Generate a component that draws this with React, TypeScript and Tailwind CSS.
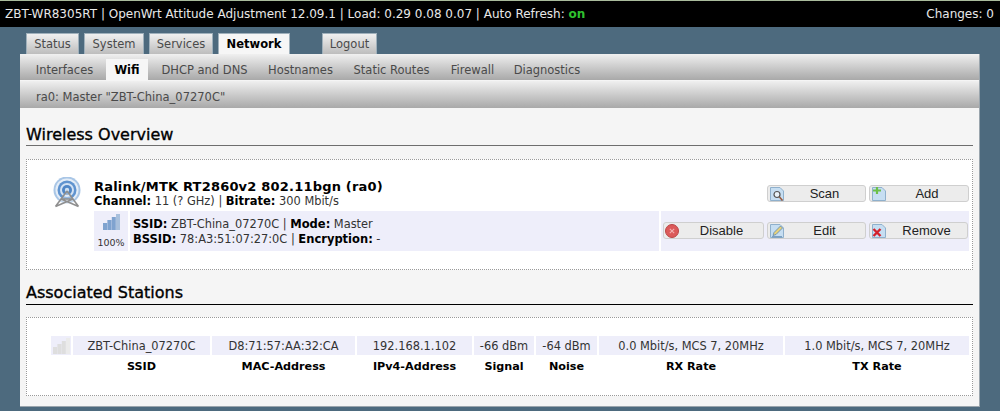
import React from 'react';

const font = "font-['DejaVu_Sans',sans-serif]";

const mainTabs = [
  { name: 'Status', w: 'w-[53px]' },
  { name: 'System', w: 'w-[60px]' },
  { name: 'Services', w: 'w-[64px]' },
  { name: 'Network', w: 'w-[72px]', active: true },
];

const subTabs = [
  { name: 'Interfaces', w: 'w-[83px]' },
  { name: 'Wifi', w: 'w-[42px]', active: true },
  { name: 'DHCP and DNS', w: 'w-[113px]' },
  { name: 'Hostnames', w: 'w-[79px]' },
  { name: 'Static Routes', w: 'w-[103px]' },
  { name: 'Firewall', w: 'w-[59px]' },
  { name: 'Diagnostics', w: 'w-[90px]' },
];

const stationCols = [
  { head: 'SSID', value: 'ZBT-China_07270C' },
  { head: 'MAC-Address', value: 'D8:71:57:AA:32:CA' },
  { head: 'IPv4-Address', value: '192.168.1.102' },
  { head: 'Signal', value: '-66 dBm' },
  { head: 'Noise', value: '-64 dBm' },
  { head: 'RX Rate', value: '0.0 Mbit/s, MCS 7, 20MHz' },
  { head: 'TX Rate', value: '1.0 Mbit/s, MCS 7, 20MHz' },
];

function TowerIcon() {
  return (
    <svg width="32" height="31" viewBox="0 0 32 31" fill="none">
      <circle cx="16" cy="13" r="13.5" fill="#a9c6e6" />
      <circle cx="16" cy="13" r="11.5" fill="#e4edf7" />
      <circle cx="16" cy="13" r="9.5" fill="#5f93cf" />
      <circle cx="16" cy="13" r="7" fill="#d3e2f3" />
      <circle cx="16" cy="13" r="5" fill="#4f86c6" />
      <circle cx="16" cy="13" r="2.2" fill="#cfe0f2" />
      <path d="M16 14 L5 29 L27 29 Z" fill="#ffffff" fillOpacity="0.35" />
      <path d="M16 14 L4.5 29.5 M16 14 L27.5 29.5 M4.5 29.5 L22 22 M27.5 29.5 L10 22 M11 22 L21 22" stroke="#8f8f8f" strokeWidth="1.6" />
    </svg>
  );
}

function SignalIcon({ color, top }: { color: string; top: string }) {
  return (
    <svg width="17" height="16" viewBox="0 0 17 16" className="shrink-0">
      <rect x="0" y="9" width="4.2" height="7" fill={color} />
      <rect x="4.4" y="6" width="4.2" height="10" fill={color} />
      <rect x="8.8" y="3" width="4" height="13" fill={color} />
      <rect x="13" y="0" width="4" height="16" fill={top} />
    </svg>
  );
}

function PageIcon({ children }: { children: React.ReactNode }) {
  return (
    <svg width="16" height="16" viewBox="0 0 16 16">
      <path d="M1.5 1.5 H11 L14.5 5 V14.5 H1.5 Z" fill="#c6def2" stroke="#8fb0cc" />
      {children}
    </svg>
  );
}

function ScanIcon() {
  return (
    <PageIcon>
      <circle cx="8" cy="8.5" r="3" fill="#e9f2f9" stroke="#555" strokeWidth="1.2" />
      <path d="M10.5 11 L13.5 14.5" stroke="#9a5a3c" strokeWidth="1.6" />
    </PageIcon>
  );
}

function AddIcon() {
  return (
    <PageIcon>
      <path d="M2 4.5 H10 M6 1 V8" stroke="#6cc04a" strokeWidth="2.2" />
    </PageIcon>
  );
}

function EditIcon() {
  return (
    <PageIcon>
      <path d="M4 12.5 L5 9.5 L11.5 3 L13.5 5 L7 11.5 Z" fill="#e8d27a" stroke="#5d87ad" strokeWidth="0.8" />
      <path d="M3 13.8 H13" stroke="#5d87ad" />
    </PageIcon>
  );
}

function RemoveIcon() {
  return (
    <PageIcon>
      <path d="M2.5 6 L9.5 13 M9.5 6 L2.5 13" stroke="#d3202a" strokeWidth="2.4" />
    </PageIcon>
  );
}

function DisableIcon() {
  return (
    <svg width="14" height="14" viewBox="0 0 14 14">
      <circle cx="7" cy="7" r="6.5" fill="#dc5a5a" stroke="#b94646" />
      <path d="M4.8 4.8 L9.2 9.2 M9.2 4.8 L4.8 9.2" stroke="#f3b0b0" strokeWidth="1.1" />
    </svg>
  );
}

function CbiButton({ label, icon, w }: { label: string; icon: React.ReactNode; w: string }) {
  return (
    <div className={`${w} h-[17px] flex items-center relative rounded-[3px] border border-[#cfcfcf] bg-[#ececec] text-[13px] text-[#222] font-['Liberation_Sans',sans-serif]`}>
      <span className="absolute left-[1px] top-0 flex h-full items-center">{icon}</span>
      <span className="flex-1 text-center pl-[16px]">{label}</span>
    </div>
  );
}

export default function App() {
  return (
    <div className={`${font} w-[1000px] h-[411px] overflow-hidden bg-[#4d6a7e] text-[11.5px] text-[#404040]`}>
      {/* Barra superior */}
      <div className="h-[1px] bg-[#a9bb9c]" />
      <div className="h-[26px] bg-black text-[#e8e8e8] text-[12px] flex items-center justify-between pl-[5px] pr-[6px]">
        <span>
          ZBT-WR8305RT | OpenWrt Attitude Adjustment 12.09.1 | Load: 0.29 0.08 0.07 | Auto Refresh:{' '}
          <span className="font-bold text-[#2fc02f]">on</span>
        </span>
        <span>Changes: 0</span>
      </div>

      {/* Menu principal */}
      <div className="h-[27px] flex items-end pl-[26px] gap-[5px]">
        {mainTabs.map((tab) => (
          <div
            key={tab.name}
            className={`${tab.w} h-[21px] pt-[2px] flex items-center justify-center border-t border-x border-[#9fb0bb]
              ${tab.active ? 'bg-[#f6f6f6] font-bold text-black' : 'bg-gradient-to-b from-[#f0f0f0] to-[#bdbdbd] text-[#4a4a4a]'}`}
          >
            {tab.name}
          </div>
        ))}
        <div className="ml-[27px] w-[55px] h-[21px] pt-[2px] flex items-center justify-center border-t border-x border-[#9fb0bb] bg-gradient-to-b from-[#f0f0f0] to-[#bdbdbd] text-[#4a4a4a]">
          Logout
        </div>
      </div>

      <div className="ml-[20px] w-[960px] h-[353px] bg-[#f5f5f5] border-b border-r border-[#9aa5ad]">
        {/* Submenu */}
        <div className="h-[26px] flex items-end pl-[3px] bg-gradient-to-b from-[#f0f0f0] to-[#a9a9a9]">
          {subTabs.map((tab) => (
            <div
              key={tab.name}
              className={`${tab.w} h-[21px] pt-[3px] flex items-center justify-center
                ${tab.active ? 'bg-[#f6f6f6] font-bold text-black' : 'text-[#4a4a4a]'}`}
            >
              {tab.name}
            </div>
          ))}
        </div>
        <div className="h-[27px] mt-[1px] flex items-center pl-[16px] pt-[7px] text-[#4a4a4a] bg-gradient-to-b from-[#f0f0f0] to-[#a9a9a9]">
          ra0: Master "ZBT-China_07270C"
        </div>

        <div className="px-[6px]">
          {/* Wireless Overview */}
          <h2 className="mt-[16px] h-[22px] text-[16px] leading-[21px] text-black border-b border-[#6e6e6e] [-webkit-text-stroke:0.35px_#000]">Wireless Overview</h2>

          <div className="mt-[13px] h-[111px] bg-white border border-dotted border-[#9a9a9a] pt-[19px] pl-[24px] pr-[4px] flex">
            <div className="w-[43px] -mt-[2px] shrink-0">
              <TowerIcon />
            </div>
            <div className="flex-1">
              <div className="h-[32px] flex justify-between">
                <div className="text-black">
                  <div className="text-[13px] leading-[15px] font-bold tracking-[0.2px]">Ralink/MTK RT2860v2 802.11bgn (ra0)</div>
                  <div className="text-[11.4px] leading-[15px] text-[#333]">
                    <b className="text-[11.5px] text-black">Channel:</b> 11 (? GHz) | <b className="text-[11.5px] text-black">Bitrate:</b> 300 Mbit/s
                  </div>
                </div>
                <div className="flex gap-[3px] pt-[6px] h-fit">
                  <CbiButton label="Scan" icon={<ScanIcon />} w="w-[99px]" />
                  <CbiButton label="Add" icon={<AddIcon />} w="w-[100px]" />
                </div>
              </div>
              <div className="flex h-[40px] gap-[2px]">
                <div className="w-[34px] bg-[#eeeefa] flex flex-col items-center text-[9.5px] leading-[12px] pt-[3px] text-[#333]">
                  <SignalIcon color="#7fa3cf" top="#a8c0dc" />
                  <span className="mt-[7px]">100%</span>
                </div>
                <div className="w-[529px] bg-[#eeeefa] pl-[3px] pt-[6px] text-[11.4px] leading-[15px] text-[#333]">
                  <div>
                    <b className="text-[11.5px] text-black">SSID:</b> ZBT-China_07270C | <b className="text-[11.5px] text-black">Mode:</b> Master
                  </div>
                  <div>
                    <b className="text-[11.5px] text-black">BSSID:</b> 78:A3:51:07:27:0C | <b className="text-[11.5px] text-black">Encryption:</b> -
                  </div>
                </div>
                <div className="w-[308px] bg-[#eeeefa] flex gap-[3px] pt-[11px] pl-[2px]">
                  <CbiButton label="Disable" icon={<DisableIcon />} w="w-[101px]" />
                  <CbiButton label="Edit" icon={<EditIcon />} w="w-[99px]" />
                  <CbiButton label="Remove" icon={<RemoveIcon />} w="w-[99px]" />
                </div>
              </div>
            </div>
          </div>

          {/* Associated Stations */}
          <h2 className="mt-[13px] h-[22px] text-[16px] leading-[20px] text-black border-b border-black [-webkit-text-stroke:0.35px_#000]">Associated Stations</h2>

          <div className="mt-[12px] h-[79px] bg-white border border-dotted border-[#9a9a9a] pt-[18px] pl-[24px]">
            <div className="grid grid-cols-[20px_137px_143px_115px_60px_61px_184px_184px] gap-x-[2px] text-[11.4px] text-[#333]">
              <div className="h-[19px] bg-[#eeeefa] flex items-center justify-center">
                <SignalIcon color="#dedede" top="#ebebeb" />
              </div>
              {stationCols.map((col) => (
                <div key={col.head} className="h-[19px] bg-[#eeeefa] flex items-center justify-center pt-[2px]">{col.value}</div>
              ))}
              <div />
              {stationCols.map((col) => (
                <div key={col.head} className="h-[25px] flex items-center justify-center text-[11.2px] font-bold text-black">{col.head}</div>
              ))}
            </div>
          </div>
        </div>
      </div>
    </div>
  );
}
